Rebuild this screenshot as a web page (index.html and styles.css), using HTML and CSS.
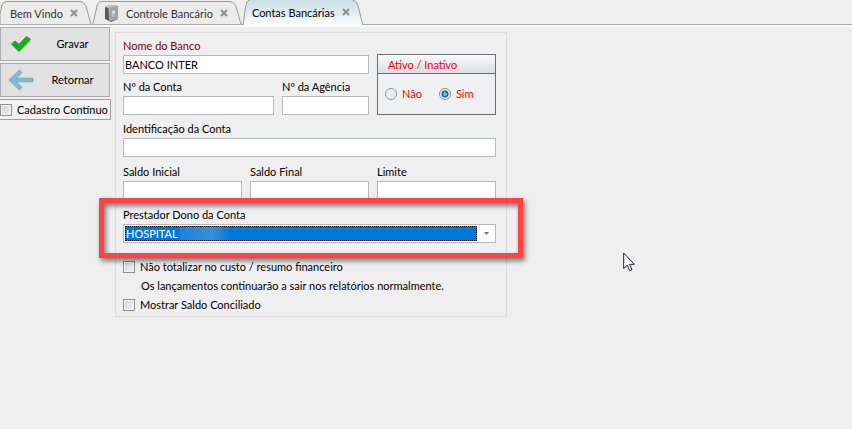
FILE: index.html
```
<!DOCTYPE html>
<html lang="pt-BR">
<head>
    <meta charset="UTF-8">
    <meta name="viewport" content="width=device-width, initial-scale=1.0">
    <title>Contas Bancárias</title>
    <link rel="stylesheet" href="styles.css">
</head>
<body>
    <nav class="abas">
        <div class="aba aba-bem-vindo">
            <svg class="aba-fundo" viewBox="0 0 92 24" preserveAspectRatio="none">
                <path d="M0 24V14L2 5Q3 1.500 7 1.500H80Q84 1.500 86 6L91 24" />
            </svg>
            <a href="#">Bem Vindo</a>
            <button type="button" class="fechar" aria-label="Fechar Bem Vindo">
                <svg width="8" height="8" viewBox="0 0 8 8"><path d="M1 1L7 7M7 1L1 7" /></svg>
            </button>
        </div>
        <div class="aba aba-controle">
            <svg class="aba-fundo" viewBox="0 0 150 24" preserveAspectRatio="none">
                <path d="M1 24L5 6Q6 1.500 10 1.500H138Q142 1.500 144 6L149 24" />
            </svg>
            <svg class="cofre" width="14" height="17" viewBox="0 0 14 17">
                <path d="M0 2L5 0L13 1V14L6 17L0 14Z" fill="#565b60" />
                <path d="M4 3L13 1V14L5 16Z" fill="#a1a7ac" />
                <path d="M0 2L5 0L13 1L4 3Z" fill="#c4c8cb" />
                <path d="M6 5L11 4V12L6 13Z" fill="#b4babf" stroke="#868c91" stroke-width=".6" />
                <circle cx="8.500" cy="7" r="1.500" fill="#e4e8eb" />
                <path d="M4 3L5 16" stroke="#d0d4d7" stroke-width=".7" />
            </svg>
            <a href="#">Controle Bancário</a>
            <button type="button" class="fechar" aria-label="Fechar Controle Bancário">
                <svg width="8" height="8" viewBox="0 0 8 8"><path d="M1 1L7 7M7 1L1 7" /></svg>
            </button>
        </div>
        <div class="aba aba-contas ativa">
            <svg class="aba-fundo" viewBox="0 0 124 25" preserveAspectRatio="none">
                <defs>
                    <linearGradient id="azul" x1="0" y1="0" x2="0" y2="1">
                        <stop offset="0" stop-color="#c9dde5" />
                        <stop offset="1" stop-color="#fafcfd" />
                    </linearGradient>
                </defs>
                <path d="M1 25L4 5Q5 0 9 -.5H112Q116 0 118 5L123 25" />
            </svg>
            <a href="#" aria-current="page">Contas Bancárias</a>
            <button type="button" class="fechar" aria-label="Fechar Contas Bancárias">
                <svg width="8" height="8" viewBox="0 0 8 8"><path d="M1 1L7 7M7 1L1 7" /></svg>
            </button>
        </div>
    </nav>

    <main class="pagina">
        <aside class="acoes">
            <button type="submit" form="contaForm" class="acao">
                <svg width="20" height="16" viewBox="0 0 20 16">
                    <path d="M0.500 8L4 5L8 8.500L15.500 0.500L19.500 3.500L8 15.500Z" fill="#0cb80c" stroke="#2b8a2b" />
                </svg>
                <span>Gravar</span>
            </button>
            <button type="button" class="acao">
                <svg width="26" height="22" viewBox="0 0 26 22">
                    <path d="M1 11L11.500 1L14 3.500L8.500 9.200H25V12.800H8.500L14 18.500L11.500 21Z" fill="#7fbcd3" stroke="#6fa5ba" stroke-width=".8" />
                </svg>
                <span>Retornar</span>
            </button>
            <label class="continuo"><input type="checkbox">Cadastro Contínuo</label>
        </aside>

        <form id="contaForm" class="painel">
            <div class="grade topo">
                <div class="identidade">
                    <div class="campo nome">
                        <label for="nome" class="obrigatorio">Nome do Banco</label>
                        <input type="text" id="nome" value="BANCO INTER">
                    </div>
                    <div class="campo conta">
                        <label for="conta">Nº da Conta</label>
                        <input type="text" id="conta">
                    </div>
                    <div class="campo agencia">
                        <label for="agencia">Nº da Agência</label>
                        <input type="text" id="agencia">
                    </div>
                </div>
                <div class="situacao" role="radiogroup" aria-labelledby="situacaoTitulo">
                    <div class="situacao-titulo" id="situacaoTitulo">Ativo / Inativo</div>
                    <div class="opcoes">
                        <label><input type="radio" name="ativo" value="nao">Não</label>
                        <label><input type="radio" name="ativo" value="sim" checked>Sim</label>
                    </div>
                </div>
            </div>

            <div class="campo">
                <label for="identificacao">Identificação da Conta</label>
                <input type="text" id="identificacao">
            </div>

            <div class="grade saldos">
                <div class="campo">
                    <label for="saldoInicial">Saldo Inicial</label>
                    <input type="text" id="saldoInicial">
                </div>
                <div class="campo">
                    <label for="saldoFinal">Saldo Final</label>
                    <input type="text" id="saldoFinal">
                </div>
                <div class="campo">
                    <label for="limite">Limite</label>
                    <input type="text" id="limite">
                </div>
            </div>

            <div class="campo prestador">
                <label for="prestador">Prestador Dono da Conta</label>
                <div class="combo">
                    <select id="prestador">
                        <option>HOSPITAL</option>
                    </select>
                    <svg class="seta" width="5" height="3" viewBox="0 0 5 3"><path d="M0 0H5L2.500 3Z" fill="#777" /></svg>
                </div>
                <div class="destaque"></div>
            </div>

            <div class="extras">
                <label><input type="checkbox">Não totalizar no custo / resumo financeiro</label>
                <p>Os lançamentos continuarão a sair nos relatórios normalmente.</p>
                <label><input type="checkbox">Mostrar Saldo Conciliado</label>
            </div>
        </form>
    </main>

    <svg class="cursor" width="12" height="20" viewBox="0 0 12 20">
        <path d="M.7 1V16.500L4.200 13.200L6.700 18.700L9 17.700L6.600 12.300H11.300Z" fill="#fff" stroke="#1b1b2b" />
    </svg>
</body>
</html>
```

FILE: styles.css
```
* {
    box-sizing: border-box;
}

body {
    margin: 0;
    min-height: 100vh;
    background: #efefef;
    color: #000;
    font-family: Lato, "Liberation Sans", sans-serif;
    font-size: 11px;
    line-height: 14px;
}

button, input, select {
    font: inherit;
    color: inherit;
    margin: 0;
}

/* Abas */
.abas {
    display: flex;
    height: 25px;
    border-bottom: 1px solid #aaa;
}

.aba {
    position: relative;
    display: flex;
    align-items: center;
    height: 24px;
    padding-top: 3px;
    color: #333;
}

.aba a {
    position: relative;
    color: inherit;
    text-decoration: none;
    white-space: nowrap;
}

.aba-bem-vindo {
    padding-left: 10px;
    padding-right: 14px;
}

.aba-controle {
    padding-left: 13px;
    padding-right: 14px;
}

.aba-contas {
    padding-left: 10px;
    padding-right: 14px;
}

.aba.ativa {
    height: 25px;
    padding-top: 1px;
    color: #000;
}

.aba-fundo {
    position: absolute;
    inset: 0;
    width: 100%;
    height: 100%;
    fill: #ebebeb;
    stroke: #989898;
}

.ativa .aba-fundo {
    fill: url(#azul);
}

.cofre {
    position: relative;
    margin-right: 7px;
}

.fechar {
    position: relative;
    display: flex;
    margin-left: 7px;
    padding: 0 0 2px;
    border: none;
    background: none;
    cursor: pointer;
}

.fechar path {
    stroke: #909090;
    stroke-width: 2;
}

/* Página */
.pagina {
    display: flex;
    align-items: flex-start;
    gap: 4px;
    border-top: 2px solid #fafafa;
}

.acoes {
    display: flex;
    flex-direction: column;
    gap: 2px;
    width: 111px;
}

.acao {
    display: flex;
    align-items: center;
    width: 110px;
    height: 34px;
    padding: 0 4px 0 7px;
    border: 1px solid #adadad;
    background: #e1e1e1;
    cursor: pointer;
}

.acao svg {
    flex: none;
    width: 26px;
}

.acao span {
    flex: 1;
    padding-left: 6px;
    text-align: center;
}

.continuo {
    display: flex;
    align-items: center;
    gap: 5px;
    height: 21px;
    border: 1px solid #a0a0a0;
    border-left: none;
    background: #f2f2f2;
    white-space: nowrap;
}

input[type="checkbox"] {
    appearance: none;
    flex: none;
    width: 12px;
    height: 12px;
    border: 1px solid #8e8f8f;
    background: linear-gradient(135deg, #cbcfd5, #f6f6f6);
    box-shadow: inset 0 0 0 1px #f4f4f4;
}

.painel {
    width: 392px;
    margin-top: 5px;
    padding: 6px 10px 4px 7px;
    border: 1px solid #dcdcdc;
}

.grade {
    display: grid;
    grid-template-columns: repeat(3, 1fr);
    gap: 8px;
}

.identidade {
    grid-column: span 2;
    display: grid;
    grid-template-columns: 151fr 87fr;
    column-gap: 8px;
    row-gap: 6px;
}

.nome {
    grid-column: span 2;
}

.campo {
    display: flex;
    flex-direction: column;
    gap: 2px;
    min-width: 0;
}

.campo label {
    white-space: nowrap;
}

.campo .obrigatorio {
    color: #800000;
}

.campo input {
    width: 100%;
    height: 19px;
    padding: 0 1px;
    border: 1px solid #b4b8bf;
    background: #fff;
}

.topo {
    margin-bottom: 7px;
}

.saldos {
    margin: 8px 0;
}

/* Ativo / Inativo */
.situacao {
    margin-top: 15px;
    border: 1px solid #6b6e72;
    background: #eff0f2;
    color: #f00;
}

.situacao-titulo {
    padding: 3px 10px 1px;
    border-bottom: 1px solid #6b6e72;
    background: linear-gradient(#f8f9fa, #d9dee6);
}

.opcoes {
    display: flex;
    gap: 17px;
    padding: 13px 7px;
}

.opcoes label {
    display: flex;
    align-items: center;
    gap: 5px;
}

.opcoes input {
    appearance: none;
    width: 12px;
    height: 12px;
    border: 1px solid #8e8f8f;
    border-radius: 50%;
    background: radial-gradient(#e2e6ec, #f6f6f6);
}

.opcoes input:checked {
    background: radial-gradient(circle, #7cc4df 0 1px, #16567e 3px, #e8edf1 4px);
}

/* Prestador */
.prestador {
    position: relative;
}

.combo {
    display: flex;
    align-items: center;
    height: 19px;
    padding: 1px 6px 1px 1px;
    border: 1px solid #b4b8bf;
    background: #fff;
}

.combo select {
    appearance: none;
    flex: 1;
    height: 15px;
    padding: 0;
    border: 1px dotted #000;
    border-radius: 0;
    background: linear-gradient(90deg, #1a83da, #3490dc 60%, #0078d7) 54px 0 / 52px 13px no-repeat #0078d7;
    color: #fff;
    line-height: 13px;
}

.seta {
    margin-left: 7px;
}

.destaque {
    position: absolute;
    inset: -10px -27px -15px -24px;
    border: 5px solid #ff4343;
    box-shadow: 2px 3px 5px rgba(0, 0, 0, 0.5), inset 2px 3px 5px rgba(0, 0, 0, 0.5);
    pointer-events: none;
}

/* Opções extras */
.extras {
    display: flex;
    flex-direction: column;
    gap: 5px;
    margin-top: 17px;
}

.extras label {
    display: flex;
    align-items: center;
    gap: 5px;
}

.extras p {
    margin: 0 0 0 18px;
    white-space: nowrap;
}

.cursor {
    position: absolute;
    left: 623px;
    top: 252px;
}
```
